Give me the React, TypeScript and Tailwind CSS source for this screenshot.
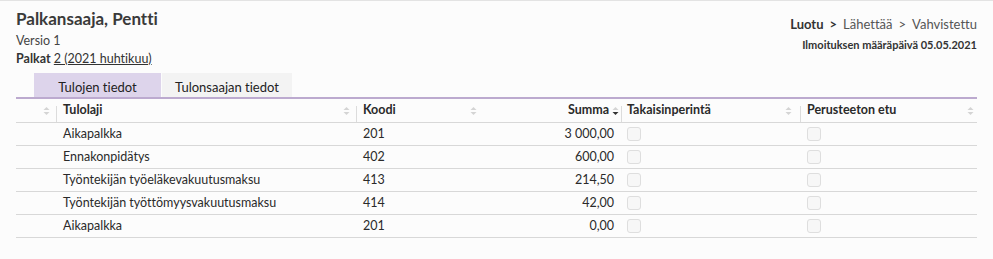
import React from 'react';

const rows = [
  { laji: 'Aikapalkka', koodi: '201', summa: '3 000,00' },
  { laji: 'Ennakonpidätys', koodi: '402', summa: '600,00' },
  { laji: 'Työntekijän työeläkevakuutusmaksu', koodi: '413', summa: '214,50' },
  { laji: 'Työntekijän työttömyysvakuutusmaksu', koodi: '414', summa: '42,00' },
  { laji: 'Aikapalkka', koodi: '201', summa: '0,00' },
];

function SortIcon({ active }: { active?: boolean }) {
  return (
    <svg width="7" height="10" viewBox="0 0 7 10" className="shrink-0">
      <path d="M3.5 1 L6.5 4 L0.5 4 Z" fill="#d4d4d4" />
      <path d="M3.5 9 L6.5 6 L0.5 6 Z" fill={active ? '#333333' : '#d4d4d4'} />
    </svg>
  );
}

function Divider() {
  return <div className="absolute left-0 top-[7px] h-[16px] w-px bg-[#dcdcdc]" />;
}

function Checkbox() {
  return <div className="h-[14px] w-[14px] rounded-[3px] border border-[#dedede] bg-[#f7f7f7]" />;
}

export default function App() {
  return (
    <div
      className="h-[259px] w-[993px] border-t border-[#e3e3e3] bg-[#fcfcfc] text-[#333] overflow-hidden [font-variant-ligatures:none]"
      style={{ fontFamily: 'Lato, "Open Sans", sans-serif' }}
    >
      <div className="flex justify-between px-4 pt-[7px]">
        <div>
          <h1 className="text-[17px] font-bold leading-[22px] text-[#3a3a3a]">Palkansaaja, Pentti</h1>
          <div className="mt-[3px] text-[12.5px] leading-[16px] text-[#444]">Versio 1</div>
          <div className="mt-[2px] text-[12.5px] leading-[16px]">
            <span className="font-bold">Palkat</span>{' '}
            <span className="underline">2 (2021 huhtikuu)</span>
          </div>
        </div>
        <div className="flex flex-col items-end pt-[8px]">
          <div className="flex items-center gap-[6px] text-[13px] leading-[16px] text-[#555]">
            <span className="font-bold text-[#333]">Luotu</span>
            <span className="font-bold text-[#333]">&gt;</span>
            <span>Lähettää</span>
            <span>&gt;</span>
            <span>Vahvistettu</span>
          </div>
          <div className="mt-[6px] text-[11px] font-bold leading-[14px] text-[#333]">
            Ilmoituksen määräpäivä 05.05.2021
          </div>
        </div>
      </div>

      <div className="mx-4 mt-[6px]">
        <div className="flex pl-[18px]">
          <div className="flex h-[24px] w-[127px] items-end justify-center bg-[#ddd4eb] pb-[2px] text-[13px] leading-[16px] text-[#222]">
            Tulojen tiedot
          </div>
          <div className="ml-px flex h-[24px] w-[130px] items-end justify-center bg-[#f3f3f3] pb-[2px] text-[13px] leading-[16px] text-[#222]">
            Tulonsaajan tiedot
          </div>
        </div>
        <div className="h-[2px] bg-[#bcaacf]" />

        <div className="grid grid-cols-[40px_300px_127px_138px_179px_177px] text-[12.5px] text-[#2a2a2a]">
          <div className="relative flex h-[24px] items-center justify-end border-b border-[#d8d8d8] pr-[6px]">
            <SortIcon />
          </div>
          <div className="relative flex h-[24px] items-center justify-between border-b border-[#d8d8d8] pl-[7px] pr-[6px] font-bold">
            <Divider />
            <span>Tulolaji</span>
            <SortIcon />
          </div>
          <div className="relative flex h-[24px] items-center justify-between border-b border-[#d8d8d8] pl-[7px] pr-[6px] font-bold">
            <Divider />
            <span>Koodi</span>
            <SortIcon />
          </div>
          <div className="relative flex h-[24px] items-center justify-end gap-[3px] border-b border-[#d8d8d8] pr-[2px] font-bold">
            <span>Summa</span>
            <SortIcon active />
          </div>
          <div className="relative flex h-[24px] items-center justify-between border-b border-[#d8d8d8] pl-[6px] pr-[8px] font-bold">
            <Divider />
            <span>Takaisinperintä</span>
            <SortIcon />
          </div>
          <div className="relative flex h-[24px] items-center justify-between border-b border-[#d8d8d8] pl-[7px] pr-[3px] font-bold">
            <Divider />
            <span>Perusteeton etu</span>
            <SortIcon />
          </div>

          {rows.map((r, i) => (
            <React.Fragment key={i}>
              <div className="h-[23px] border-b border-[#d8d8d8]" />
              <div className="flex h-[23px] items-center border-b border-[#d8d8d8] pl-[7px]">{r.laji}</div>
              <div className="flex h-[23px] items-center border-b border-[#d8d8d8] pl-[7px]">{r.koodi}</div>
              <div className="flex h-[23px] items-center justify-end border-b border-[#d8d8d8] pr-[7px]">{r.summa}</div>
              <div className="flex h-[23px] items-center border-b border-[#d8d8d8] pl-[6px]">
                <Checkbox />
              </div>
              <div className="flex h-[23px] items-center border-b border-[#d8d8d8] pl-[7px]">
                <Checkbox />
              </div>
            </React.Fragment>
          ))}
        </div>
      </div>
    </div>
  );
}
